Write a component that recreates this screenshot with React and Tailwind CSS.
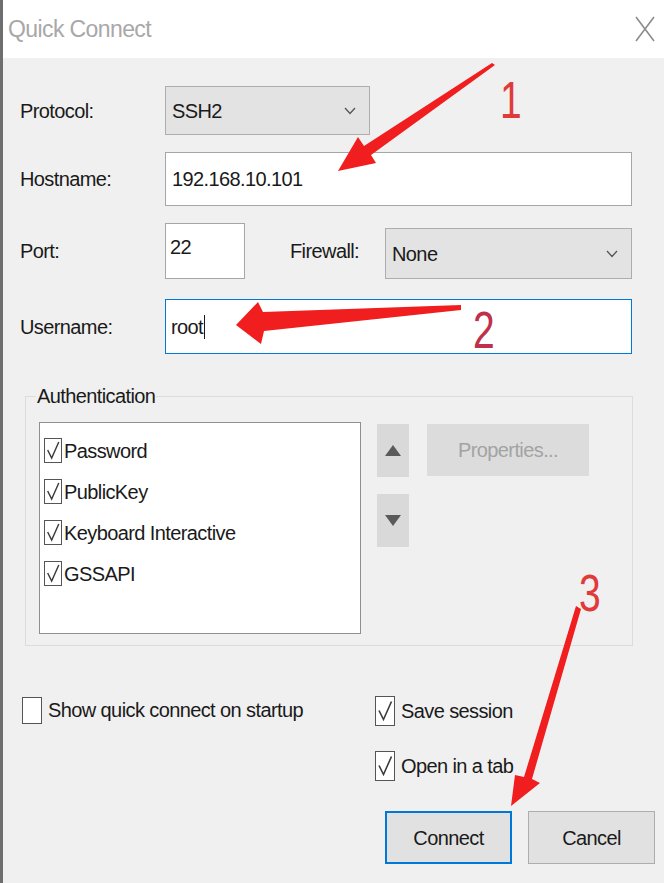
import React from 'react';

const font = "font-['Liberation_Sans',sans-serif] tracking-[-0.6px]";

function Box({ checked, className = '' }) {
  return (
    <span className={`inline-flex shrink-0 border border-[#555] bg-white ${className}`}>
      {checked && (
        <svg viewBox="0 0 18 25" className="h-full w-full">
          <polyline points="3,12 7.5,21 15.5,3" fill="none" stroke="#3a3a3a" strokeWidth="1.6" />
        </svg>
      )}
    </span>
  );
}

function Chevron() {
  return (
    <svg width="12" height="8" viewBox="0 0 12 8">
      <polyline points="1,1 6,6.5 11,1" fill="none" stroke="#555" strokeWidth="1.3" />
    </svg>
  );
}

function Combo({ value, className = '' }) {
  return (
    <div
      className={`flex items-center justify-between border border-[#adadad] bg-[#e3e3e3] pl-[6px] pr-[13px] text-[20px] text-[#1a1a1a] ${className}`}
    >
      <span>{value}</span>
      <Chevron />
    </div>
  );
}

function Row({ label, children, className = '' }) {
  return (
    <div className={`flex items-center ${className}`}>
      <span className="w-[145px] shrink-0 text-[20px] text-[#1a1a1a]">{label}</span>
      {children}
    </div>
  );
}

function Annotations() {
  return (
    <>
      <svg className="pointer-events-none absolute inset-0" width="664" height="883" viewBox="0 0 664 883">
        {/* arrow 1 */}
        <polygon
          points="492,65 368,155 373,163 335,171 355,137 361,146 489,63"
          fill="#f01e1e"
        />
        {/* arrow 2 */}
        <polygon
          points="458,305 260,312 255,302 233,325 258,344 261,331 458,310"
          fill="#f01e1e"
        />
        {/* arrow 3 */}
        <polygon
          points="573,606 521,777 512,775 508,806 537,783 529,779 578,609"
          fill="#f01e1e"
        />
      </svg>
      <span className="absolute left-[497px] top-[74px] origin-left scale-x-75 text-[52px] leading-none text-[#e03a3a]">
        1
      </span>
      <span className="absolute left-[470px] top-[304px] origin-left scale-x-75 text-[52px] leading-none text-[#c0304a]">
        2
      </span>
      <span className="absolute left-[576px] top-[567px] origin-left scale-x-75 text-[52px] leading-none text-[#e03a3a]">
        3
      </span>
    </>
  );
}

export default function App() {
  return (
    <div className={`relative h-[883px] w-[664px] overflow-hidden border-l-[3px] border-[#6e6e6e] bg-[#f0f0f0] ${font}`}>
      <div className="flex h-[58px] items-center justify-between bg-white pl-[5px] pr-[8px]">
        <span className="text-[23px] text-[#a8a8a8]">Quick Connect</span>
        <svg width="22" height="28" viewBox="0 0 22 28">
          <path d="M2 2 L20 26 M20 2 L2 26" stroke="#8c8c8c" strokeWidth="1.6" fill="none" />
        </svg>
      </div>

      <div className="pl-[17px]">
        <Row label="Protocol:" className="mt-[28px] h-[49px]">
          <Combo value="SSH2" className="h-[49px] w-[205px]" />
        </Row>

        <Row label="Hostname:" className="mt-[17px] h-[54px]">
          <div className="flex h-[54px] w-[467px] items-center border border-[#a6a6a6] bg-white pl-[6px] text-[20px] text-[#1a1a1a]">
            192.168.10.101
          </div>
        </Row>

        <div className="mt-[16px] flex h-[57px] items-center">
          <span className="w-[145px] shrink-0 text-[20px] text-[#1a1a1a]">Port:</span>
          <div className="h-[56px] w-[80px] border border-[#a6a6a6] bg-white pl-[4px] pt-[8px] text-[20px] text-[#1a1a1a]">
            22
          </div>
          <span className="ml-[45px] w-[95px] shrink-0 text-[20px] text-[#1a1a1a]">Firewall:</span>
          <Combo value="None" className="mt-[6px] h-[51px] w-[247px]" />
        </div>

        <Row label="Username:" className="mt-[20px] h-[55px]">
          <div className="flex h-[55px] w-[467px] items-center border border-[#0078d7] bg-white pl-[5px] text-[20px] text-[#1a1a1a]">
            root<span className="ml-[1px] h-[24px] w-[1px] bg-[#1a1a1a]" />
          </div>
        </Row>

        <fieldset className="ml-[5px] mt-[30px] h-[262px] w-[608px] border border-[#dcdcdc] px-[10px] pt-[14px]">
          <legend className="px-[1px] text-[20px] leading-[24px] text-[#1a1a1a]">Authentication</legend>
          <div className="flex">
            <div className="ml-[3px] h-[212px] w-[322px] border border-[#8f8f8f] bg-white pl-[4px] pt-[7px]">
              {['Password', 'PublicKey', 'Keyboard Interactive', 'GSSAPI'].map((item) => (
                <div key={item} className="flex h-[41px] items-center gap-[2px] text-[20px] text-[#1a1a1a]">
                  <Box checked className="h-[25px] w-[18px]" />
                  <span>{item}</span>
                </div>
              ))}
            </div>
            <div className="ml-[16px] flex flex-col gap-[17px] pt-[2px]">
              <div className="flex h-[53px] w-[32px] items-center justify-center bg-[#d9d9d9]">
                <svg width="16" height="11" viewBox="0 0 16 11">
                  <polygon points="8,0 16,11 0,11" fill="#5a5a5a" />
                </svg>
              </div>
              <div className="flex h-[53px] w-[32px] items-center justify-center bg-[#d9d9d9]">
                <svg width="16" height="11" viewBox="0 0 16 11">
                  <polygon points="0,0 16,0 8,11" fill="#5a5a5a" />
                </svg>
              </div>
            </div>
            <div className="ml-[18px] mt-[2px] flex h-[52px] w-[162px] items-center justify-center bg-[#dcdcdc] text-[20px] text-[#a3a3a3]">
              Properties...
            </div>
          </div>
        </fieldset>

        <div className="mt-[50px] flex">
          <div className="flex h-[28px] w-[355px] items-center gap-[6px] pl-[2px] text-[20px] text-[#1a1a1a]">
            <Box className="h-[27px] w-[20px]" />
            <span>Show quick connect on startup</span>
          </div>
          <div className="flex flex-col gap-[25px]">
            <div className="flex h-[30px] items-center gap-[6px] text-[20px] text-[#1a1a1a]">
              <Box checked className="h-[30px] w-[20px]" />
              <span>Save session</span>
            </div>
            <div className="flex h-[30px] items-center gap-[6px] text-[20px] text-[#1a1a1a]">
              <Box checked className="h-[30px] w-[20px]" />
              <span>Open in a tab</span>
            </div>
          </div>
        </div>

        <div className="mt-[30px] flex justify-end gap-[16px] pr-[9px]">
          <button className="flex h-[53px] w-[127px] items-center justify-center border-2 border-[#0078d7] bg-[#e1e1e1] text-[20px] text-[#1a1a1a]">
            Connect
          </button>
          <button className="flex h-[53px] w-[127px] items-center justify-center border border-[#adadad] bg-[#e1e1e1] text-[20px] text-[#1a1a1a]">
            Cancel
          </button>
        </div>
      </div>

      <Annotations />
    </div>
  );
}
